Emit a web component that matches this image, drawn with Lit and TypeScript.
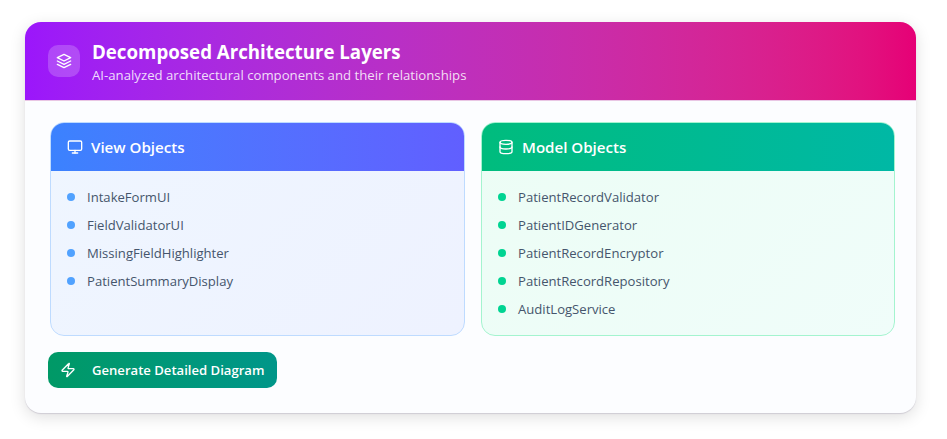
import { LitElement, html, css, svg } from "lit";
import { customElement } from "lit/decorators.js";

const ic = (body: unknown, cls = "") => html`<svg class=${cls} viewBox="0 0 24 24" fill="none" stroke="currentColor" stroke-width="2" stroke-linecap="round" stroke-linejoin="round">${body}</svg>`;
const layers = svg`<path d="M12 2 2 7l10 5 10-5-10-5Z"/><path d="m2 12 10 5 10-5"/><path d="m2 17 10 5 10-5"/>`;
const monitor = svg`<rect x="2" y="3" width="20" height="14" rx="2"/><path d="M8 21h8"/><path d="M12 17v4"/>`;
const db = svg`<ellipse cx="12" cy="5" rx="9" ry="3"/><path d="M3 5v14a9 3 0 0 0 18 0V5"/><path d="M3 12a9 3 0 0 0 18 0"/>`;
const zap = svg`<path d="M4 14a1 1 0 0 1-.78-1.63l9.9-10.2a.5.5 0 0 1 .86.46l-1.92 6.02A1 1 0 0 0 13 10h7a1 1 0 0 1 .78 1.63l-9.9 10.2a.5.5 0 0 1-.86-.46l1.92-6.02A1 1 0 0 0 11 14z"/>`;

@customElement("app-root")
export class AppRoot extends LitElement {
  static styles = css`
    :host { display: block; width: 947px; height: 439px; background: #fff; font-family: "Open Sans", "Noto Sans", sans-serif; overflow: hidden; padding: 22px 31px 0 25px; box-sizing: border-box; }
    .shell { height: 391px; border-radius: 16px; overflow: hidden; background: #fcfdff; box-shadow: 0 1px 1px rgba(70,50,100,.16), 0 4px 16px rgba(0,0,0,.13); }
    .top { height: 78px; box-sizing: content-box; border-bottom: 1px solid #e9c6e4; background: linear-gradient(90deg in oklab, #9b16fb, #e60076); display: flex; align-items: center; gap: 12px; padding-left: 23px; color: #fff; }
    .badge { width: 32px; height: 32px; border-radius: 10px; background: rgba(255,255,255,.2); display: flex; align-items: center; justify-content: center; }
    .badge svg { width: 16px; height: 16px; }
    h1 { margin: 0; font-size: 18.7px; line-height: 28px; font-weight: 700; }
    .top p { margin: 0; font-size: 13.2px; line-height: 18px; color: rgba(255,255,255,.85); }
    .body { padding: 21px 21px 0 25px; }
    .grid { display: grid; grid-template-columns: 415px 414px; gap: 16px; height: 214px; }
    .panel { border-radius: 14px; overflow: hidden; border: 1px solid; box-sizing: border-box; }
    .panel.blue { background: linear-gradient(135deg in oklab, #eff6ff, #eef2ff); border-color: #bedbff; }
    .panel.green { background: linear-gradient(135deg in oklab, #ecfdf5, #f0fdfa); border-color: #a4f4cf; }
    .head { height: 48px; display: flex; align-items: center; gap: 8px; padding-left: 16px; color: #fff; font-size: 15.1px; font-weight: 600; }
    .head svg { width: 16px; height: 16px; }
    .blue .head { background: linear-gradient(90deg in oklab, #3b82fe, #615fff); }
    .green .head { background: linear-gradient(90deg in oklab, #00bc7d, #00b8a5); }
    ul { list-style: none; margin: 0; padding: 12px 16px; }
    li { height: 28px; display: flex; align-items: center; gap: 12px; font-size: 13.1px; color: #45556c; }
    .dot { width: 8px; height: 8px; border-radius: 50%; }
    .blue .dot { background: #51a2ff; }
    .green .dot { background: #00d492; }
    button { all: unset; box-sizing: border-box; margin: 16px 0 0 -2px; width: 229px; height: 36px; border-radius: 10px; background: linear-gradient(90deg in oklab, #009966, #009689); color: #fff; display: flex; align-items: center; gap: 16px; padding-left: 12px; font-size: 13.1px; font-weight: 600; }
    button svg { width: 16px; height: 16px; }
  `;
  render() {
    const view = ["IntakeFormUI", "FieldValidatorUI", "MissingFieldHighlighter", "PatientSummaryDisplay"];
    const model = ["PatientRecordValidator", "PatientIDGenerator", "PatientRecordEncryptor", "PatientRecordRepository", "AuditLogService"];
    const list = (a: string[]) => html`<ul>${a.map(t => html`<li><span class="dot"></span>${t}</li>`)}</ul>`;
    return html`<div class="shell">
      <div class="top"><div class="badge">${ic(layers)}</div><div><h1>Decomposed Architecture Layers</h1><p>AI-analyzed architectural components and their relationships</p></div></div>
      <div class="body">
        <div class="grid">
          <div class="panel blue"><div class="head">${ic(monitor)}View Objects</div>${list(view)}</div>
          <div class="panel green"><div class="head">${ic(db)}Model Objects</div>${list(model)}</div>
        </div>
        <button>${ic(zap)}Generate Detailed Diagram</button>
      </div>
    </div>`;
  }
}
